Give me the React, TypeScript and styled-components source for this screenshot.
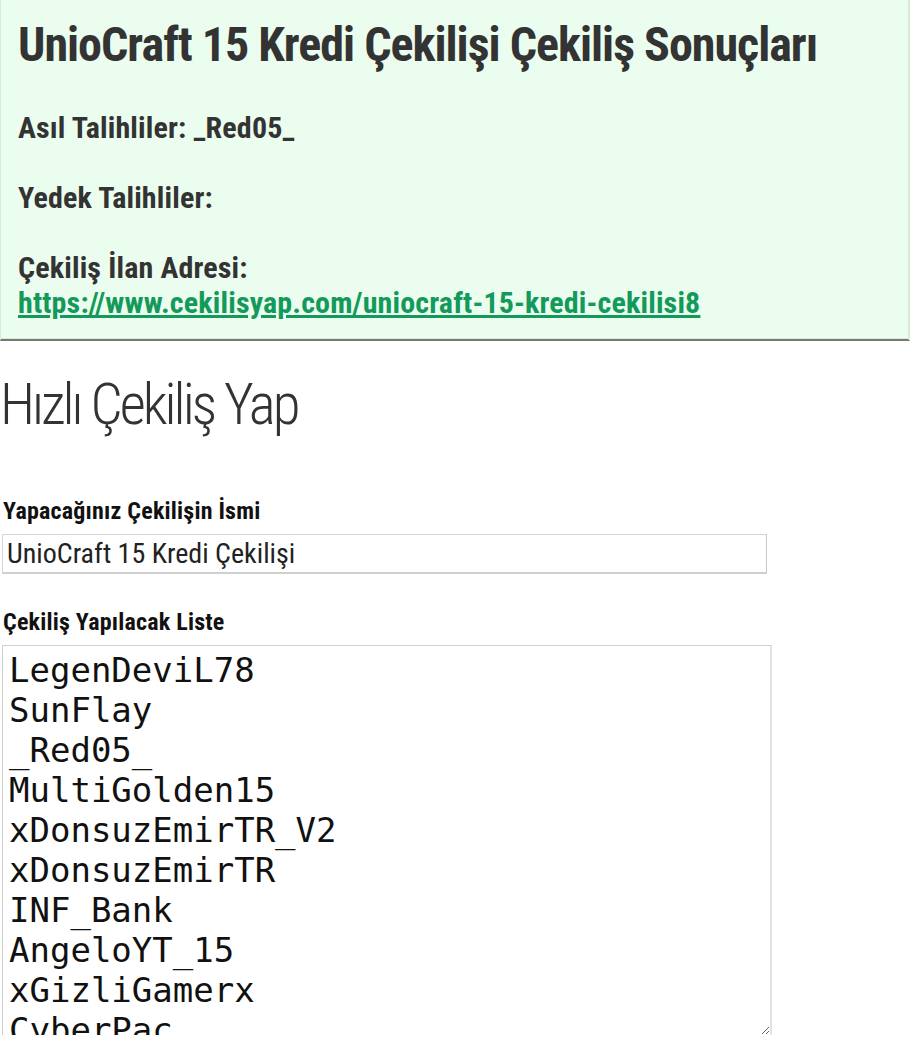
import React from 'react';
import styled, { createGlobalStyle } from 'styled-components';

const GlobalStyle = createGlobalStyle`
  html, body {
    margin: 0;
    padding: 0;
    background: #fff;
  }
  body {
    font-family: "Roboto Condensed", Roboto, "Liberation Sans", sans-serif;
    color: #333;
  }
`;

const entries = [
  'LegenDeviL78',
  'SunFlay',
  '_Red05_',
  'MultiGolden15',
  'xDonsuzEmirTR_V2',
  'xDonsuzEmirTR',
  'INF_Bank',
  'AngeloYT_15',
  'xGizliGamerx',
  'CyberPac',
  'Kaan_Yt',
];

const App: React.FC = () => {
  return (
    <Page>
      <GlobalStyle />
      <ResultBox>
        <ResultTitle>UnioCraft 15 Kredi Çekilişi Çekiliş Sonuçları</ResultTitle>
        <ResultLine>Asıl Talihliler: _Red05_</ResultLine>
        <ResultLine>Yedek Talihliler:</ResultLine>
        <ResultLine>
          Çekiliş İlan Adresi:
          <br />
          <ResultLink href="#">https://www.cekilisyap.com/uniocraft-15-kredi-cekilisi8</ResultLink>
        </ResultLine>
      </ResultBox>

      <PageTitle>Hızlı Çekiliş Yap</PageTitle>

      <Form>
        <Field>
          <Label>Yapacağınız Çekilişin İsmi</Label>
          <TextInput defaultValue="UnioCraft 15 Kredi Çekilişi" />
        </Field>
        <Field>
          <Label>Çekiliş Yapılacak Liste</Label>
          <ListArea defaultValue={entries.join('\n')} />
        </Field>
      </Form>
    </Page>
  );
};

export default App;

const Page = styled.div`
  width: 910px;
  height: 1046px;
  overflow: hidden;
`;

const ResultBox = styled.div`
  background: #ebfdee;
  border-left: 1px solid #d4ecd8;
  border-right: 2px solid #d4ecd8;
  border-bottom: 2px solid #777;
  box-shadow: inset 0 -1px 0 #d4ecd8;
  padding: 10px 17px 19px;
`;

const ResultTitle = styled.h2`
  margin: 0 0 30px;
  font-size: 48px;
  line-height: 70px;
  font-weight: 700;
  letter-spacing: -1px;
  color: #333;
`;

const ResultLine = styled.p`
  margin: 0 0 35px;
  font-size: 30px;
  line-height: 35px;
  font-weight: 700;
  letter-spacing: 0.15px;
  color: #333;

  &:last-child {
    margin-bottom: 0;
  }
`;

const ResultLink = styled.a`
  color: #139a5b;
  text-decoration: underline;
`;

const PageTitle = styled.h1`
  margin: 24px 0 0;
  font-size: 57px;
  line-height: 80px;
  font-weight: 300;
  color: #333;
  letter-spacing: -3px;
`;

const Form = styled.div`
  display: flex;
  flex-direction: column;
  gap: 36px;
  padding: 54px 0 0 2px;
`;

const Field = styled.div`
  display: flex;
  flex-direction: column;
  gap: 11px;
`;

const Label = styled.label`
  padding-left: 1px;
  font-size: 24px;
  line-height: 24px;
  font-weight: 700;
  letter-spacing: 0.2px;
  color: #111;
`;

const TextInput = styled.input`
  box-sizing: border-box;
  width: 765px;
  height: 40px;
  padding: 0 4px;
  border: 1px solid #d6d6d6;
  border-right-color: #c8c8c8;
  border-bottom: 2px solid #cfcfcf;
  font-family: inherit;
  font-size: 28px;
  color: #222;
  background: #fff;
  outline: none;
`;

const ListArea = styled.textarea`
  box-sizing: border-box;
  width: 770px;
  height: 390px;
  padding: 4px 6px;
  border: 1px solid #cfcfcf;
  border-right: 2px solid #e2e2e2;
  border-bottom: none;
  font-family: "DejaVu Sans Mono", monospace;
  font-size: 34px;
  line-height: normal;
  color: #111;
  background: #fff;
  resize: vertical;
  overflow: hidden;
  outline: none;
`;
